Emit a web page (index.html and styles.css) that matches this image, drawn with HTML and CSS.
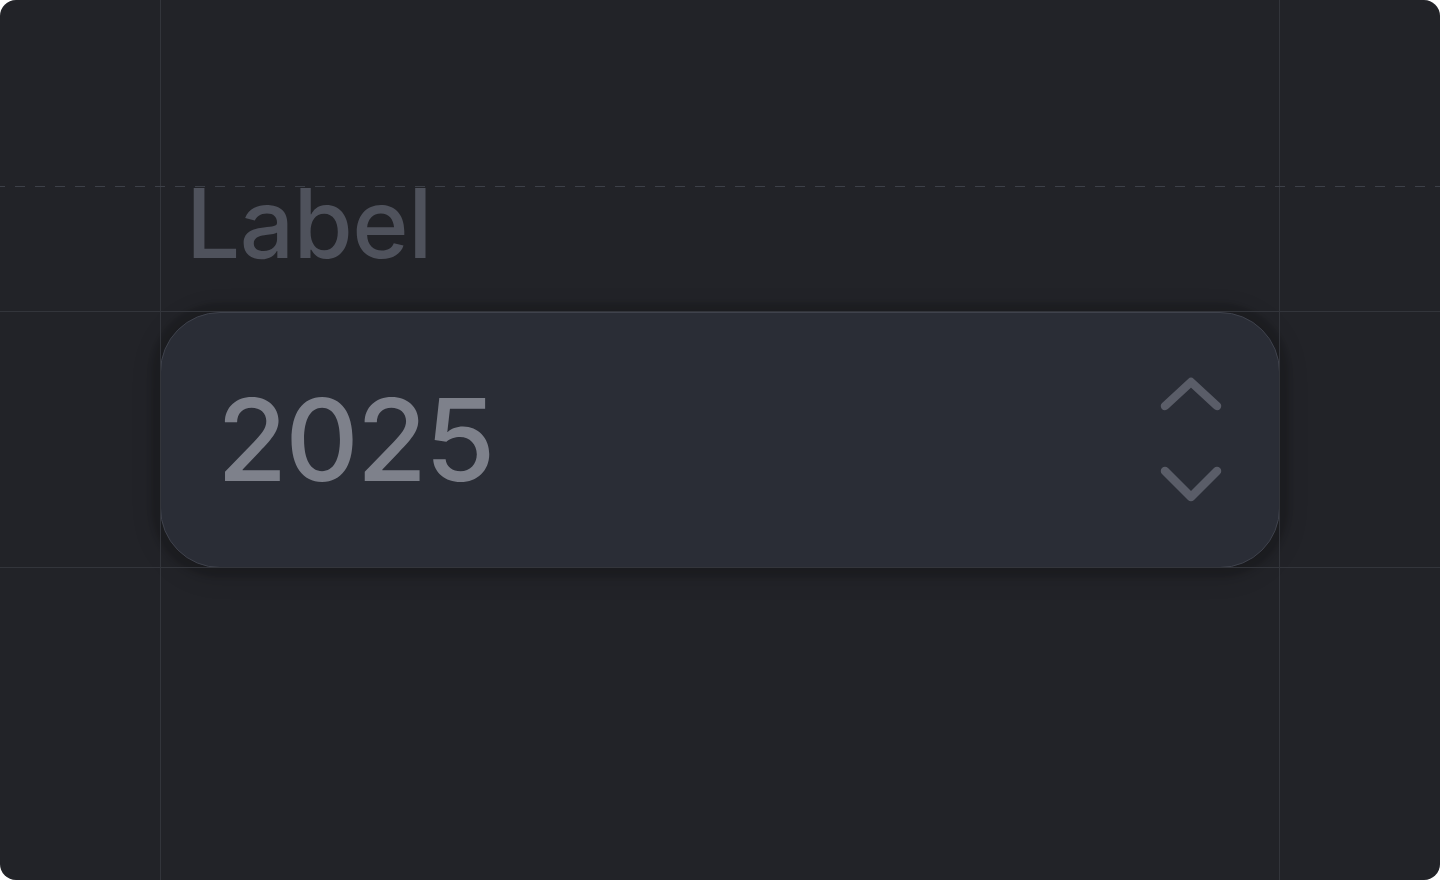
FILE: index.html
```html
<!DOCTYPE html>
<html lang="en">
<head>
<meta charset="utf-8">
<title>Number input</title>
<link rel="stylesheet" href="styles.css">
</head>
<body>
<div class="frame">
  <div class="guide guide-v guide-left"></div>
  <div class="guide guide-v guide-right"></div>
  <div class="guide guide-h guide-top"></div>
  <div class="guide guide-h guide-bottom"></div>
  <div class="guide-dash"></div>
  <div class="field">
    <label class="label" for="year">Label</label>
    <div class="input">
      <span class="value" id="year">2025</span>
      <svg class="stepper" width="64" height="128" viewBox="0 0 64 128" aria-hidden="true">
        <polyline points="6,30 32,6 58,30" />
        <polyline points="6,95 32,121 58,95" />
      </svg>
    </div>
  </div>
</div>
</body>
</html>
```

FILE: styles.css
```css
html, body {
  margin: 0;
  padding: 0;
  background: #ffffff;
}

.frame {
  position: relative;
  width: 1440px;
  height: 880px;
  border-radius: 16px;
  background: #222328;
  overflow: hidden;
  box-sizing: border-box;
  padding: 175px 160px 0 160px;
  font-family: Inter, "Noto Sans", sans-serif;
}

.guide {
  position: absolute;
  background: #33353b;
  z-index: 2;
  pointer-events: none;
}
.guide-v { top: 0; bottom: 0; width: 1px; }
.guide-h { left: 0; right: 0; height: 1px; }
.guide-left { left: 160px; }
.guide-right { left: 1279px; }
.guide-top { top: 311px; }
.guide-bottom { top: 567px; }

.guide-dash {
  position: absolute;
  left: 0;
  right: 0;
  top: 186px;
  height: 1px;
  background: repeating-linear-gradient(to right, #3d4048 0 10px, transparent 10px 20px);
  background-position: -5px 0;
  z-index: 2;
}

.field {
  display: flex;
  flex-direction: column;
  position: relative;
  z-index: 1;
}

.label {
  padding-left: 26px;
  font-size: 96px;
  font-weight: 500;
  letter-spacing: -0.6px;
  line-height: 96px;
  color: #4f525c;
  margin-bottom: 41px;
}

.input {
  position: relative;
  z-index: 3;
  height: 256px;
  box-sizing: border-box;
  border: 1px solid #3f424c;
  border-radius: 60px;
  background: #2a2d36;
  display: flex;
  align-items: center;
  justify-content: space-between;
  padding: 0 56px 0 56px;
  box-shadow: 0 0 4px 9px rgba(0,0,0,0.12), 0 4px 24px 6px rgba(0,0,0,0.12);
}

.value {
  font-size: 114px;
  font-weight: 500;
  letter-spacing: -2px;
  line-height: 114px;
  color: #7e818b;
}

.stepper {
  display: block;
  fill: none;
  stroke: #5a5d68;
  stroke-width: 8.5;
  stroke-linecap: round;
  stroke-linejoin: round;
}
```
